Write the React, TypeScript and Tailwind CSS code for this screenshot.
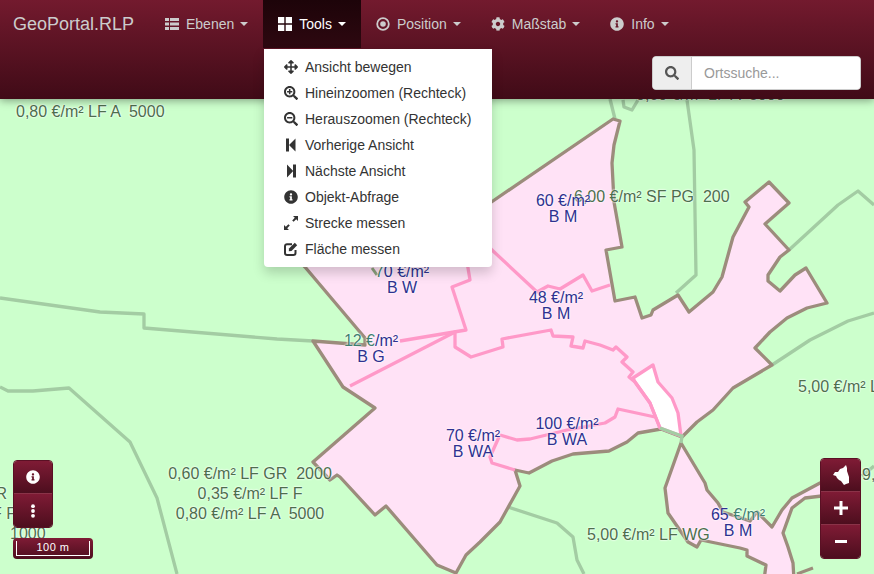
import { FaArrowsAlt, FaCog, FaInfoCircle, FaSearch, FaSearchMinus, FaSearchPlus } from "react-icons/fa";
import type { ReactNode } from "react";

const ThList = () => (
  <svg width="14" height="14" viewBox="0 0 14 14" fill="currentColor">
    <path d="M0 1h4v3H0zM5 1h9v3H5zM0 5.5h4v3H0zM5 5.5h9v3H5zM0 10h4v3H0zM5 10h9v3H5z" />
  </svg>
);

const ThLarge = () => (
  <svg width="14" height="14" viewBox="0 0 14 14" fill="currentColor">
    <path d="M0 0h6.3v6.3H0zM7.7 0H14v6.3H7.7zM0 7.7h6.3V14H0zM7.7 7.7H14V14H7.7z" />
  </svg>
);

const Record = () => (
  <svg width="14" height="14" viewBox="0 0 14 14" fill="none">
    <circle cx="7" cy="7" r="5.8" stroke="currentColor" strokeWidth="1.8" />
    <circle cx="7" cy="7" r="2.8" fill="currentColor" />
  </svg>
);

const StepBack = () => (
  <svg width="14" height="14" viewBox="0 0 14 14" fill="currentColor">
    <path d="M2 0.5h3v13H2zM11.5 0.5v13L5 7z" />
  </svg>
);

const StepForward = () => (
  <svg width="14" height="14" viewBox="0 0 14 14" fill="currentColor">
    <path d="M12 0.5H9v13h3zM3 0.5v13L9.2 7z" />
  </svg>
);

const ResizeFull = () => (
  <svg width="14" height="14" viewBox="0 0 14 14" fill="currentColor">
    <path d="M9 0h5v5l-1.8-1.8-2.6 2.6-1.4-1.4 2.6-2.6zM0 14V9l1.8 1.8 2.6-2.6 1.4 1.4-2.6 2.6L5 14z" />
  </svg>
);

const EditBox = () => (
  <svg width="14" height="14" viewBox="0 0 14 14" fill="none">
    <path d="M8 2.2H3a2 2 0 0 0-2 2V11a2 2 0 0 0 2 2h6.5a2 2 0 0 0 2-2V8" stroke="currentColor" strokeWidth="2" />
    <path d="M5 6.5 10.8 0.8 13.2 3.2 7.5 9 4.8 9.3z" fill="currentColor" />
  </svg>
);

const Kebab = () => (
  <svg width="14" height="14" viewBox="0 0 14 14" fill="currentColor">
    <circle cx="7" cy="2.2" r="1.9" />
    <circle cx="7" cy="7" r="1.9" />
    <circle cx="7" cy="11.8" r="1.9" />
  </svg>
);

const Caret = () => (
  <svg className="ml-[6px]" width="8" height="4" viewBox="0 0 8 4" fill="currentColor">
    <polygon points="0,0 8,0 4,4" />
  </svg>
);

const navItems = [
  { label: "Ebenen", icon: <ThList /> },
  { label: "Tools", icon: <ThLarge />, active: true },
  { label: "Position", icon: <Record /> },
  { label: "Maßstab", icon: <FaCog size={14} /> },
  { label: "Info", icon: <FaInfoCircle size={14} /> },
];

const menuItems = [
  { label: "Ansicht bewegen", icon: <FaArrowsAlt size={14} /> },
  { label: "Hineinzoomen (Rechteck)", icon: <FaSearchPlus size={14} /> },
  { label: "Herauszoomen (Rechteck)", icon: <FaSearchMinus size={14} /> },
  { label: "Vorherige Ansicht", icon: <StepBack /> },
  { label: "Nächste Ansicht", icon: <StepForward /> },
  { label: "Objekt-Abfrage", icon: <FaInfoCircle size={14} /> },
  { label: "Strecke messen", icon: <ResizeFull /> },
  { label: "Fläche messen", icon: <EditBox /> },
];

const greenLines = [
  "0,298 100,312 144,314 144,328 277,339 313,341",
  "0,387 8,391 33,391 69,388 130,442 157,498 177,574",
  "610,99 615,119",
  "623,100 624,107 632,110 638,100",
  "687,100 694,150 696,275 676,293",
  "789,250 838,205 858,191 874,205",
  "772,365 810,340 848,321 874,313",
  "508,507 557,523 573,537 577,560 584,574",
  "862,476 874,466",
];

const mainArea =
  "613,119 620,121 614,145 612,163 614,202 622,247 606,250 615,301 635,297 642,318 651,315 653,310 678,295 689,312 713,292 722,277 733,237 749,207 745,202 769,182 789,203 765,224 789,250 780,257 768,275 768,281 780,291 795,275 806,268 827,303 807,308 787,318 770,332 755,348 772,365 733,388 713,410 697,422 682,437 661,429 638,433 627,442 609,451 573,454 552,461 529,473 515,470 520,486 500,522 480,542 466,555 456,573 437,565 386,506 375,515 340,477 337,475 330,480 313,462 375,408 343,387 313,341 365,345 365,338 305,267 270,230 490,203";

const lowerArea =
  "681,443 665,488 668,513 677,526 688,542 697,547 701,540 740,548 747,550 747,556 766,565 764,580 794,580 793,563 788,547 783,533 792,508 805,498 830,495 830,482 820,483 792,498 782,510 772,527 757,512 750,521 723,512 718,503 707,490 705,483";

const pinkLines = [
  "400,341 466,330 452,287 470,280 467,262",
  "350,386 455,332 455,347 471,357 503,347 502,339 551,330 553,336 573,337 571,346 583,348 585,341 600,345 613,350 616,347 627,357 622,362 633,372 629,377 635,382 650,403 660,428",
  "480,236 492,250 537,292 548,286 560,289 583,275 592,291 610,285",
  "500,435 517,440 530,439 567,430 605,423 615,417 618,409 655,417",
  "499,437 490,457 492,463 515,470",
];

// hand placed map labels
const Label = ({ className, children }: { className: string; children: ReactNode }) => (
  <div
    className={`absolute whitespace-pre text-[16px] leading-[20px] text-[#4d6e4d] [text-shadow:0_0_2px_#fff,0_0_2px_#fff] ${className}`}
  >
    {children}
  </div>
);

const PriceLabel = ({ className, children, zone }: { className: string; children: ReactNode; zone: string }) => (
  <div
    className={`absolute -translate-x-1/2 whitespace-pre text-center text-[16px] leading-[16px] text-[#2e3190] [text-shadow:0_0_2px_#fff,0_0_2px_#fff] ${className}`}
  >
    <div>{children}</div>
    <div>{zone}</div>
  </div>
);

const MapButton = ({ children, last }: { children: ReactNode; last?: boolean }) => (
  <button
    className={`flex h-[33px] w-full items-center justify-center bg-linear-to-b from-[#7f1b35] to-[#4d0e1e] text-white ${
      last ? "" : "border-b border-[#8a3348]"
    }`}
  >
    {children}
  </button>
);

export default function App() {
  return (
    <div className="relative h-[574px] w-[874px] overflow-hidden bg-[#ccffcc] font-['Liberation_Sans',Arial,sans-serif] text-[14px]">
      {/* map canvas */}
      <svg className="absolute inset-0" width="874" height="574" viewBox="0 0 874 574" fill="none">
        <g stroke="#a3cca3" strokeWidth="3.3" strokeLinejoin="round">
          {greenLines.map((points) => (
            <polyline key={points} points={points} />
          ))}
        </g>
        <polygon points={mainArea} fill="#ffe2f6" stroke="#9c8c7c" strokeWidth="3.3" strokeLinejoin="round" />
        <polygon points={lowerArea} fill="#ffe2f6" stroke="#9c8c7c" strokeWidth="3.3" strokeLinejoin="round" />
        <polygon
          points="633,378 653,365 658,382 672,398 678,413 681,436 660,428 650,403 635,382"
          fill="#fff"
          stroke="#ff99c8"
          strokeWidth="3.3"
          strokeLinejoin="round"
        />
        <g stroke="#ff99c8" strokeWidth="3.3" strokeLinejoin="round">
          {pinkLines.map((points) => (
            <polyline key={points} points={points} />
          ))}
        </g>
        <polyline points="660,428 682,436 681,443" stroke="#a3cca3" strokeWidth="3.3" />
        <polyline points="372,268 377,275" stroke="#8ca07c" strokeWidth="3" />
        <polyline points="813,568 797,574" stroke="#9c8c7c" strokeWidth="3" />
      </svg>

      <Label className="left-[16px] top-[82px]">0,35 €/m² LF F</Label>
      <Label className="left-[16px] top-[102px]">{"0,80 €/m² LF A  5000"}</Label>
      <Label className="left-[636px] top-[85px]">{"0,60 €/m² LF A  5000"}</Label>
      <Label className="left-[574px] top-[187px]">{"6,00 €/m² SF PG  200"}</Label>
      <Label className="left-[798px] top-[377px]">5,00 €/m² LF</Label>
      <Label className="left-[862px] top-[465px]">9,</Label>
      <Label className="left-[587px] top-[525px]">5,00 €/m² LF WG</Label>
      <Label className="right-[867px] top-[484px]">0,60 €/m² LF GR</Label>
      <Label className="right-[858px] top-[504px]">0,35 €/m² LF F F</Label>
      <Label className="left-[10px] top-[524px]">1000</Label>
      <Label className="left-[250px] top-[464px] -translate-x-1/2 text-center">
        <div>{"0,60 €/m² LF GR  2000"}</div>
        <div>0,35 €/m² LF F</div>
        <div>{"0,80 €/m² LF A  5000"}</div>
      </Label>

      <PriceLabel className="left-[563px] top-[193px]" zone="B M">60 €/m²</PriceLabel>
      <PriceLabel className="left-[402px] top-[264px]" zone="B W">
        <span className="text-[#3f7f70]">7</span>0 €/m²
      </PriceLabel>
      <PriceLabel className="left-[556px] top-[290px]" zone="B M">48 €/m²</PriceLabel>
      <PriceLabel className="left-[371px] top-[333px]" zone="B G">
        <span className="text-[#3f7f70]">12 €</span>/m²
      </PriceLabel>
      <PriceLabel className="left-[473px] top-[428px]" zone="B WA">70 €/m²</PriceLabel>
      <PriceLabel className="left-[567px] top-[416px]" zone="B WA">100 €/m²</PriceLabel>
      <PriceLabel className="left-[738px] top-[507px]" zone="B M">
        65 <span className="text-[#3f7f70]">€/m²</span>
      </PriceLabel>

      {/* navbar */}
      <nav className="relative h-[99px] bg-linear-to-b from-[#731a2e] to-[#400b17] shadow-[0_2px_8px_rgba(0,0,0,0.35)]">
        <div className="flex h-[48px] items-center">
          <a className="flex h-full w-[150px] items-center pl-[13px] text-[18px] text-[#cccccc]">GeoPortal.RLP</a>
          <ul className="flex h-full">
            {navItems.map((item) => (
              <li
                key={item.label}
                className={`flex h-full items-center px-[15px] ${
                  item.active ? "bg-linear-to-b from-[#1d0409] to-[#2e0810] text-white" : "text-[#cccccc]"
                }`}
              >
                <span className="mr-[7px]">{item.icon}</span>
                {item.label}
                <Caret />
              </li>
            ))}
          </ul>
        </div>
        <div className="mt-[8px] flex justify-end pr-[13px]">
          <div className="flex h-[34px] w-[209px] overflow-hidden rounded-[4px] border border-[#cccccc] bg-white">
            <span className="flex w-[39px] items-center justify-center border-r border-[#cccccc] bg-[#eeeeee] text-[#555555]">
              <FaSearch size={14} />
            </span>
            <input
              className="w-0 flex-1 bg-white px-[12px] text-[14px] text-[#555555] outline-none placeholder:text-[#999999]"
              placeholder="Ortssuche..."
            />
          </div>
        </div>
      </nav>

      {/* tools dropdown */}
      <ul className="absolute left-[264px] top-[49px] w-[228px] rounded-b-[4px] bg-white py-[5px] text-[#333333] shadow-[0_6px_12px_rgba(0,0,0,0.175)]">
        {menuItems.map((item) => (
          <li key={item.label} className="flex h-[26px] items-center whitespace-nowrap pl-[20px]">
            <span className="mr-[7px] flex w-[14px] justify-center">{item.icon}</span>
            {item.label}
          </li>
        ))}
      </ul>

      {/* map controls */}
      <div className="absolute left-[13px] top-[460px] w-[40px] overflow-hidden rounded-[4px] border border-[#5a1024]">
        <MapButton>
          <FaInfoCircle size={14} />
        </MapButton>
        <MapButton last>
          <Kebab />
        </MapButton>
      </div>

      <div className="absolute left-[13px] top-[538px] flex h-[21px] w-[80px] items-center justify-center rounded-[4px] bg-linear-to-b from-[#7f1b35] to-[#4d0e1e] px-[3px]">
        <div className="flex h-[15px] w-full items-center justify-center border-x border-b border-white pb-[1px] text-[11px] leading-none tracking-[0.5px] text-white">
          100 m
        </div>
      </div>

      <div className="absolute left-[820px] top-[458px] w-[41px] overflow-hidden rounded-[4px] border border-[#5a1024]">
        <MapButton>
          <svg width="18" height="21" viewBox="0 0 18 21" fill="white">
            <polygon points="1,10 3,7 6,7 8,4 11,3 14,0 15,3 15,6 16,9 17,12 17,18 14,19 12,20 9,16 7,15 5,13 4,11" />
          </svg>
        </MapButton>
        <MapButton>
          <svg width="14" height="14" viewBox="0 0 14 14" fill="white">
            <path d="M5.5 0h3v5.5H14v3H8.5V14h-3V8.5H0v-3h5.5z" />
          </svg>
        </MapButton>
        <MapButton last>
          <svg width="12" height="4" viewBox="0 0 12 4" fill="white">
            <rect width="12" height="3" />
          </svg>
        </MapButton>
      </div>
    </div>
  );
}
